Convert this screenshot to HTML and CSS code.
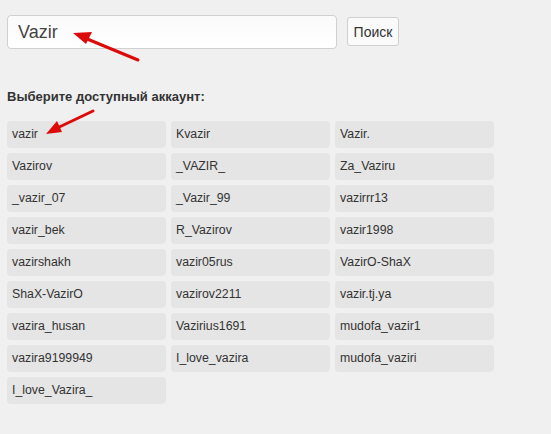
FILE: index.html
```html
<!DOCTYPE html>
<html lang="ru">
<head>
<meta charset="utf-8">
<link rel="stylesheet" href="styles.css">
</head>
<body>
<div class="page">
  <form class="search">
    <input class="search-input" type="text" value="Vazir">
    <button class="search-btn" type="button">Поиск</button>
  </form>
  <h3 class="title">Выберите доступный аккаунт:</h3>
  <div class="grid">
    <div class="item">vazir</div>
    <div class="item">Kvazir</div>
    <div class="item">Vazir.</div>
    <div class="item">Vazirov</div>
    <div class="item">_VAZIR_</div>
    <div class="item">Za_Vaziru</div>
    <div class="item">_vazir_07</div>
    <div class="item">_Vazir_99</div>
    <div class="item">vazirrr13</div>
    <div class="item">vazir_bek</div>
    <div class="item">R_Vazirov</div>
    <div class="item">vazir1998</div>
    <div class="item">vazirshakh</div>
    <div class="item">vazir05rus</div>
    <div class="item">VazirO-ShaX</div>
    <div class="item">ShaX-VazirO</div>
    <div class="item">vazirov2211</div>
    <div class="item">vazir.tj.ya</div>
    <div class="item">vazira_husan</div>
    <div class="item">Vazirius1691</div>
    <div class="item">mudofa_vazir1</div>
    <div class="item">vazira9199949</div>
    <div class="item">I_love_vazira</div>
    <div class="item">mudofa_vaziri</div>
    <div class="item">I_love_Vazira_</div>
  </div>
</div>
<svg class="arrows" width="551" height="434" viewBox="0 0 551 434">
  <g stroke="#dd0a0a" stroke-width="3" stroke-linecap="round" fill="none">
    <line x1="138" y1="60" x2="80" y2="36"/>
    <line x1="93" y1="111" x2="53" y2="130"/>
  </g>
  <g fill="#dd0a0a">
    <polygon points="73,33 92,32 86,44"/>
    <polygon points="46,134 57,121 62,132"/>
  </g>
</svg>
</body>
</html>
```
FILE: styles.css
```css
html, body {
  margin: 0;
  padding: 0;
  background: #f0f0f0;
}
body {
  font-family: "Liberation Sans", Arial, sans-serif;
  color: #333;
  position: relative;
  width: 551px;
  height: 434px;
  overflow: hidden;
}
.page {
  padding: 15px 7px 0 7px;
}
.search {
  display: flex;
  align-items: flex-start;
  gap: 10px;
  margin: 0;
}
.search-input {
  box-sizing: border-box;
  width: 330px;
  height: 34px;
  margin: 0;
  padding: 0 10px;
  border: 1px solid #d0d0d0;
  border-radius: 4px;
  background: linear-gradient(#fafafa, #ffffff);
  font-family: "Liberation Sans", Arial, sans-serif;
  font-size: 18px;
  color: #444;
  outline: none;
}
.search-btn {
  box-sizing: border-box;
  margin-top: 2px;
  width: 52px;
  height: 29px;
  padding: 0;
  border: 1px solid #d0d0d0;
  border-radius: 3px;
  background: #fafafa;
  font-family: "Liberation Sans", Arial, sans-serif;
  font-size: 14px;
  color: #333;
}
.title {
  margin: 41px 0 0 0;
  font-size: 13px;
  font-weight: bold;
  line-height: 13px;
  color: #333;
}
.grid {
  margin-top: 18px;
  display: grid;
  grid-template-columns: repeat(3, 159px);
  grid-auto-rows: 27px;
  gap: 5px;
}
.item {
  background: #e5e5e5;
  border-radius: 4px;
  padding: 0 5px;
  font-size: 12.3px;
  line-height: 27px;
  color: #333;
}
.arrows {
  position: absolute;
  left: 0;
  top: 0;
  pointer-events: none;
}
```
